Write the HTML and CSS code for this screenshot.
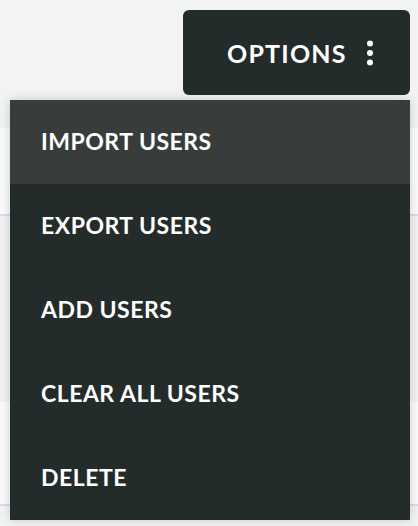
FILE: index.html
```html
<!DOCTYPE html>
<html>
<head>
<meta charset="utf-8">
<link rel="stylesheet" href="styles.css">
</head>
<body>
<div class="page">
  <div class="toolbar">
    <div class="options-wrap">
      <button class="options-btn">
        <span class="options-label">OPTIONS</span>
        <svg class="kebab" width="8" height="26" viewBox="0 0 8 26"><circle cx="4" cy="3.5" r="3"/><circle cx="4" cy="13" r="3"/><circle cx="4" cy="22.5" r="3"/></svg>
      </button>
      <ul class="menu">
        <li class="menu-item active">IMPORT USERS</li>
        <li class="menu-item">EXPORT USERS</li>
        <li class="menu-item">ADD USERS</li>
        <li class="menu-item">CLEAR ALL USERS</li>
        <li class="menu-item">DELETE</li>
      </ul>
    </div>
  </div>
  <div class="rows">
    <div class="row row-a"></div>
    <div class="gap"></div>
    <div class="row row-b"></div>
  </div>
</div>
</body>
</html>
```
FILE: styles.css
```css
html, body {
  margin: 0;
  padding: 0;
  background: #f2f3f5;
  font-family: "Lato", "Liberation Sans", sans-serif;
}
.page {
  width: 418px;
  height: 526px;
  overflow: hidden;
}
.toolbar {
  display: flex;
  justify-content: flex-end;
  padding: 10px 8px 0 0;
}
.options-wrap {
  position: relative;
}
.options-btn {
  width: 227px;
  height: 85px;
  border: none;
  border-radius: 6px;
  background: #242b2b;
  color: #fff;
  display: flex;
  align-items: center;
  justify-content: flex-start;
  gap: 21px;
  padding: 0 0 0 44px;
  font-family: inherit;
  cursor: pointer;
}
.options-label {
  font-size: 25px;
  font-weight: 700;
  letter-spacing: 1.2px;
  margin-right: -1.2px;
}
.kebab {
  fill: #fff;
}
.menu {
  position: absolute;
  top: 90px;
  right: 0;
  width: 400px;
  margin: 0;
  padding: 0;
  list-style: none;
  background: #242b2b;
  box-shadow: 0 0 10px rgba(0, 0, 0, 0.18);
  z-index: 2;
}
.menu-item {
  height: 84px;
  display: flex;
  align-items: center;
  padding: 0 0 2px 31px;
  box-sizing: border-box;
  color: #fff;
  font-size: 23px;
  font-weight: 700;
  letter-spacing: 0.5px;
}
.menu-item.active {
  background: #383d3b;
}
.rows {
  padding-top: 33px;
}
.row {
  background: #fafbfc;
  border-bottom: 2px solid #dcdde0;
}
.row-a {
  height: 86px;
}
.gap {
  height: 186px;
}
.row-b {
  height: 102px;
}
```
